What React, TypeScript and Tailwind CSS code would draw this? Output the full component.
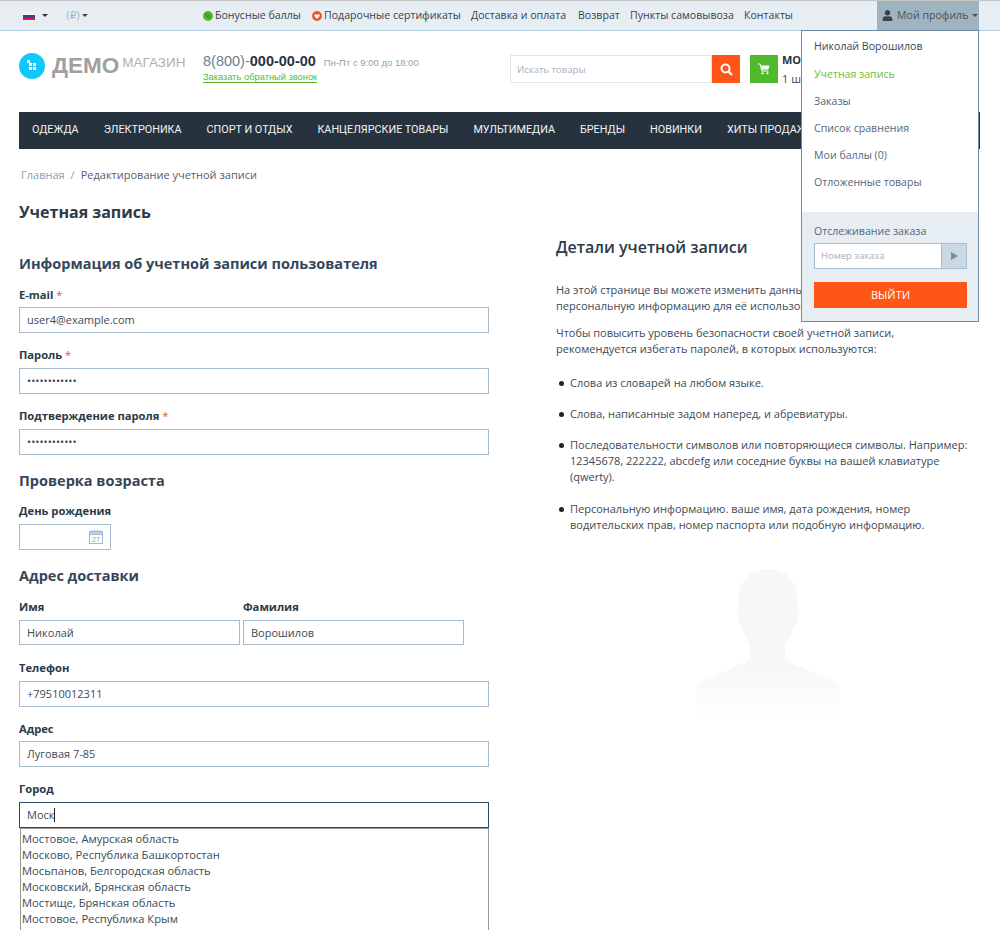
import { FaUser } from 'react-icons/fa';

const topLinks = ['Доставка и оплата', 'Возврат', 'Пункты самовывоза', 'Контакты'];
const navItems = ['ОДЕЖДА', 'ЭЛЕКТРОНИКА', 'СПОРТ И ОТДЫХ', 'КАНЦЕЛЯРСКИЕ ТОВАРЫ', 'МУЛЬТИМЕДИА', 'БРЕНДЫ', 'НОВИНКИ', 'ХИТЫ ПРОДАЖ'];
const cities = [
	'Мостовое, Амурская область',
	'Москово, Республика Башкортостан',
	'Мосьпанов, Белгородская область',
	'Московский, Брянская область',
	'Мостище, Брянская область',
	'Мостовое, Республика Крым',
];
const bullet = "relative before:absolute before:left-[-11px] before:top-[6px] before:w-[5px] before:h-[5px] before:rounded-full before:bg-[#222]";

function Caret({ className }: { className: string }) {
	return <span className={`inline-block w-0 h-0 border-x-[3px] border-x-transparent border-t-[3px] ${className}`}></span>;
}

function Label({ children }: { children: React.ReactNode }) {
	return <div className="h-[19px] text-[11.2px] leading-[18px] font-bold text-[#2b3a48]">{children}</div>;
}

function Field({ label, required, value, top, gap }: { label: string; required?: boolean; value: string; top: string; gap: string }) {
	return (
		<div className={top}>
			<Label>
				{label}
				{required && <span className="text-[#e0533c] font-normal"> *</span>}
			</Label>
			<div className={`${gap} h-[26px] w-[470px] border border-[#a9bccd] px-[7px] text-[11px] leading-[24px] text-[#3c4a57]`}>{value}</div>
		</div>
	);
}

function NameField({ label, value, width }: { label: string; value: string; width: string }) {
	return (
		<div className={width}>
			<Label>{label}</Label>
			<div className="mt-[3px] h-[25px] border border-[#a9bccd] px-[7px] text-[11px] leading-[24px] text-[#3c4a57]">{value}</div>
		</div>
	);
}

function Silhouette() {
	return (
		<svg width="146" height="150" viewBox="0 0 146 150" className="block">
			<defs>
				<linearGradient id="fade" x1="0" y1="0" x2="0" y2="1">
					<stop offset="0.65" stopColor="#f7f7f7" />
					<stop offset="1" stopColor="#fefefe" />
				</linearGradient>
			</defs>
			<path
				d="M73 0C53 0 44 14 44 28L44 38C42 38 42 42 42 46C43 54 46 57 48 62C50 68 52 72 55 75L55 90L50 93L10 111C3 114 1 119 1 128L1 146L145 146L145 128C145 119 143 114 136 111L94 93L90 90L90 75C93 72 95 68 97 62C99 57 103 54 104 46C104 42 104 38 102 38L102 28C102 14 93 0 73 0Z"
				fill="url(#fade)"
			/>
		</svg>
	);
}

export default function App() {
	return (
		<div className="relative w-[1000px] h-[930px] overflow-hidden bg-white font-['Open_Sans','Noto_Sans',sans-serif] text-[#3c4a57]">
			{/* top bar */}
			<div className="h-[31px] border-t border-t-[#c4c4c4] border-b border-b-[#b3cfe2] bg-[#e6eef4] flex items-center whitespace-nowrap text-[10.6px] text-[#39424c] pl-[23px]">
				<div className="w-[180px] flex items-center">
					<span className="flex w-[12px] h-[8px] flex-col overflow-hidden">
						<span className="h-[3px] bg-[#eef0f4]"></span>
						<span className="h-[3px] bg-[#3344a8]"></span>
						<span className="h-[2px] bg-[#d8202c]"></span>
					</span>
					<Caret className="ml-[7px] border-t-[#333]" />
					<span className="ml-[18px] font-['DejaVu_Sans',sans-serif] text-[10px] text-[#a7b0b9]">(₽)</span>
					<Caret className="ml-[2px] border-t-[#444]" />
				</div>
				<svg width="10" height="10" viewBox="0 0 10 10" className="shrink-0">
					<circle cx="5" cy="5" r="5" fill="#53b82f" />
					<path d="M6.8 3.2 3.2 6.8" stroke="#2f7a18" strokeWidth="1" />
					<circle cx="3.5" cy="3.5" r="1" fill="#2f7a18" />
					<circle cx="6.5" cy="6.5" r="1" fill="#2f7a18" />
				</svg>
				<span className="ml-[2px] w-[97px]">Бонусные баллы</span>
				<svg width="10" height="10" viewBox="0 0 10 10" className="shrink-0">
					<circle cx="5" cy="5" r="5" fill="#f0562a" />
					<path d="M5 8 2.4 5C1.7 3.6 4 2.4 5 3.9 6 2.4 8.3 3.6 7.6 5Z" fill="#fff" />
				</svg>
				<span className="ml-[2px] w-[147px]">Подарочные сертификаты</span>
				<span className="w-[107px]">{topLinks[0]}</span>
				<span className="w-[52px]">{topLinks[1]}</span>
				<span className="w-[114px]">{topLinks[2]}</span>
				<span className="w-[133px]">{topLinks[3]}</span>
				<div className="w-[102px] h-[29px] bg-[#9fb3c0] flex items-center pl-[5px] text-[#49535c]">
					<FaUser size={11} color="#39424c" />
					<span className="ml-[4px]">Мой профиль</span>
					<Caret className="ml-[4px] border-t-[#49535c]" />
				</div>
			</div>

			{/* header */}
			<div className="h-[81px] flex pl-[19px] pt-[22px]">
				<div className="w-[184px] flex">
					<div className="relative w-[26px] h-[26px] rounded-full bg-[#12c8fb]">
						<span className="absolute left-[8px] top-[7px] w-[3px] h-[3px] bg-white"></span>
						<div className="absolute left-[10px] top-[10px] grid grid-cols-2 gap-[1px]">
							<span className="w-[3px] h-[3px] bg-white"></span>
							<span className="w-[3px] h-[3px] bg-white"></span>
							<span className="w-[3px] h-[3px] bg-white"></span>
							<span className="w-[3px] h-[3px] bg-white"></span>
						</div>
					</div>
					<div className="ml-[7px] font-['Liberation_Sans',sans-serif] text-[22.5px] leading-[25px] font-bold text-[#a0a0a0]">ДЕМО</div>
					<div className="ml-[3px] pt-px font-['Liberation_Sans',sans-serif] text-[13.5px] leading-[18px] text-[#b0b0b0]">МАГАЗИН</div>
				</div>
				<div className="w-[307px] font-['Liberation_Sans',sans-serif]">
					<div className="flex items-baseline h-[16px] leading-[16px] text-[14.5px] text-[#6d7f92]">
						<span>8(800)-</span>
						<span className="font-bold text-[#2a3440]">000-00-00</span>
						<span className="ml-[8px] text-[9.5px] text-[#9a9ea3]">Пн-Пт с 9:00 до 18:00</span>
					</div>
					<span className="block w-fit text-[9.3px] leading-[10px] text-[#56bb33] border-b border-[#56bb33] mt-[3px]">Заказать обратный звонок</span>
				</div>
				<div className="w-[202px] h-[28px] mt-[2px] border border-[#e0e6ee] pl-[6px] text-[9.5px] leading-[27px] text-[#a6b0c0]">Искать товары</div>
				<div className="w-[28px] h-[28px] mt-[2px] bg-[#ff5517] flex items-center justify-center">
					<svg width="13" height="13" viewBox="0 0 13 13" fill="none" stroke="#fff">
						<circle cx="5.5" cy="5.5" r="4" strokeWidth="2" />
						<path d="M8.5 8.5 12 12" strokeWidth="2.4" />
					</svg>
				</div>
				<div className="ml-[10px] w-[28px] h-[28px] mt-[2px] bg-[#4fbb2c] flex items-center justify-center">
					<svg width="12" height="12" viewBox="0 0 12 12">
						<path d="M0 1H2.2L3.8 8H10.5" fill="none" stroke="#fff" strokeWidth="1" />
						<path d="M3 2.5H11.5L10.3 6.5H4Z" fill="#fff" />
						<circle cx="4.5" cy="10.3" r="1.1" fill="#fff" />
						<circle cx="9.5" cy="10.3" r="1.1" fill="#fff" />
					</svg>
				</div>
				<div className="ml-[4px] text-[11px] leading-[19px] mt-[-3px] whitespace-nowrap">
					<div className="font-bold text-[#2a3440]">МОЯ КОРЗИНА</div>
					<div className="text-[#3c4a57]">1 шт.</div>
				</div>
			</div>

			{/* nav */}
			<div className="ml-[19px] w-[961px] h-[37px] bg-[#26323e] flex items-center whitespace-nowrap pl-[13px] gap-[25px] font-['Roboto',sans-serif] text-[10.8px] text-[#f2f4f6]">
				{navItems.map((item) => (
					<span key={item}>{item}</span>
				))}
			</div>

			<div className="ml-[21px] mt-[18px] h-[16px] text-[11px] leading-[16px] text-[#55606b]">
				<span className="text-[#8c9eb0]">Главная</span>
				<span className="mx-[6px] text-[#8c9eb0]">/</span>
				<span>Редактирование учетной записи</span>
			</div>

			<h1 className="ml-[19px] mt-[17px] h-[24px] text-[16px] leading-[24px] font-bold text-[#2b3a48]">Учетная запись</h1>

			<div className="flex pl-[19px]">
				{/* form */}
				<div className="w-[537px]">
					<h2 className="mt-[27px] h-[24px] text-[14.5px] leading-[26px] font-bold text-[#34465a]">Информация об учетной записи пользователя</h2>
					<Field label="E-mail" required value="user4@example.com" top="mt-[11px]" gap="mt-[2px]" />
					<Field label="Пароль" required value="••••••••••••" top="mt-[13px]" gap="mt-[3px]" />
					<Field label="Подтверждение пароля" required value="••••••••••••" top="mt-[13px]" gap="mt-[3px]" />
					<h2 className="mt-[13px] h-[24px] text-[14.5px] leading-[26px] font-bold text-[#34465a]">Проверка возраста</h2>
					<div className="mt-[10px]">
						<Label>День рождения</Label>
					</div>
					<div className="mt-[3px] h-[26px] w-[92px] border border-[#a9bccd] flex items-center justify-end pr-[7px]">
						<svg width="14" height="14" viewBox="0 0 14 14">
							<rect x="0.5" y="1.5" width="13" height="12" fill="#fff" stroke="#9db9d3" />
							<rect x="0.5" y="1.5" width="13" height="3" fill="#c6d8e8" stroke="#9db9d3" />
							<path d="M3 0v3M5.5 0v3M8.5 0v3M11 0v3" stroke="#9db9d3" />
							<text x="7" y="12" textAnchor="middle" fontSize="7" fill="#8aa0b5" fontFamily="Liberation Sans">27</text>
						</svg>
					</div>
					<h2 className="mt-[13px] h-[24px] text-[14.5px] leading-[26px] font-bold text-[#34465a]">Адрес доставки</h2>
					<div className="mt-[11px] flex gap-[3px]">
						<NameField label="Имя" value="Николай" width="w-[221px]" />
						<NameField label="Фамилия" value="Ворошилов" width="w-[221px]" />
					</div>
					<Field label="Телефон" value="+79510012311" top="mt-[14px]" gap="mt-[3px]" />
					<Field label="Адрес" value="Луговая 7-85" top="mt-[13px]" gap="mt-[2px]" />
					<div className="mt-[13px]">
						<Label>Город</Label>
						<div className="mt-[3px] h-[26px] w-[470px] border border-[#2f4a60] px-[7px] text-[11px] text-[#3c4a57] flex items-center">
							Моск<span className="w-px h-[14px] bg-[#222]"></span>
						</div>
						<div className="ml-px w-[469px] h-[110px] border-x border-t border-[#9a9a9a] pl-px text-[11.2px] leading-[16px] pt-[2px] text-[#3c4a57]">
							{cities.map((city) => (
								<div key={city}>{city}</div>
							))}
						</div>
					</div>
				</div>

				{/* details */}
				<div className="w-[425px] pt-[11px]">
					<h2 className="h-[24px] text-[16px] leading-[24px] font-semibold text-[#2b3a48]">Детали учетной записи</h2>
					<div className="mt-[23px] text-[11px] leading-[16px] text-[#3c4a57]">
						<p>На этой странице вы можете изменить данные своей учетной записи и<br />персональную информацию для её использования.</p>
						<p className="mt-[11px]">Чтобы повысить уровень безопасности своей учетной записи,<br />рекомендуется избегать паролей, в которых используются:</p>
						<ul className="mt-[18px] flex flex-col gap-[15px] pl-[14px]">
							<li className={bullet}>Слова из словарей на любом языке.</li>
							<li className={bullet}>Слова, написанные задом наперед, и абревиатуры.</li>
							<li className={bullet}>Последовательности символов или повторяющиеся символы. Например:<br />12345678, 222222, abcdefg или соседние буквы на вашей клавиатуре<br />(qwerty).</li>
							<li className={`mt-px ${bullet}`}>Персональную информацию. ваше имя, дата рождения, номер<br />водительских прав, номер паспорта или подобную информацию.</li>
						</ul>
					</div>
					<div className="mt-[36px] ml-[139px]">
						<Silhouette />
					</div>
				</div>
			</div>

			{/* profile menu */}
			<div className="absolute left-[801px] top-[30px] w-[178px] h-[292px] border border-[#6d8ba6] bg-white flex flex-col text-[10.6px] text-[#55677a]">
				<div className="pl-[12px] pt-[7px] flex flex-col flex-1">
					<div className="h-[28px] leading-[17px] text-[#34465a]">Николай Ворошилов</div>
					<div className="h-[27px] leading-[17px] text-[#6bc12c]">Учетная запись</div>
					<div className="h-[27px] leading-[17px]">Заказы</div>
					<div className="h-[27px] leading-[17px]">Список сравнения</div>
					<div className="h-[27px] leading-[17px]">Мои баллы (0)</div>
					<div className="h-[27px] leading-[17px]">Отложенные товары</div>
				</div>
				<div className="h-[109px] bg-[#e6eef4] pl-[12px] pr-[11px] pt-[11px]">
					<div className="h-[16px] leading-[16px]">Отслеживание заказа</div>
					<div className="mt-[4px] h-[26px] border border-[#a9bccd] bg-white flex">
						<div className="flex-1 pl-[6px] text-[9.5px] leading-[24px] text-[#a6b0c0]">Номер заказа</div>
						<div className="w-[25px] bg-[#c9d9e3] border-l border-[#a9bccd] flex items-center justify-center">
							<span className="w-0 h-0 border-y-[4px] border-y-transparent border-l-[7px] border-l-[#808a92]"></span>
						</div>
					</div>
					<div className="mt-[13px] h-[26px] bg-[#ff5517] text-white text-center text-[11px] leading-[26px]">ВЫЙТИ</div>
				</div>
			</div>
		</div>
	);
}
